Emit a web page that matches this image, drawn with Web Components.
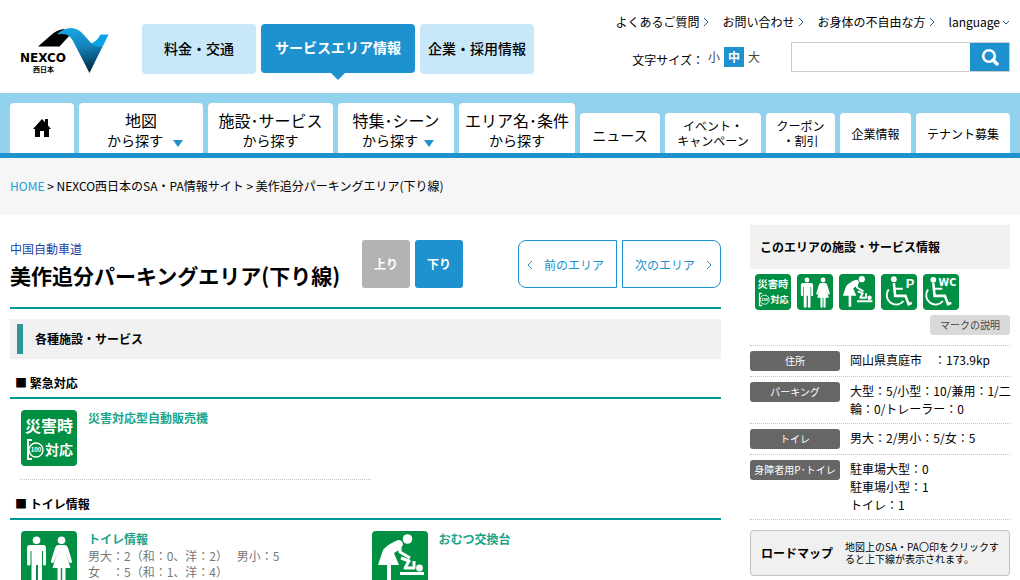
<!DOCTYPE html>
<html lang="ja">
<head>
<meta charset="utf-8">
<meta name="viewport" content="width=device-width, initial-scale=1">
<title>美作追分パーキングエリア(下り線)</title>
<style>
  :root { --blue: #1e92cf; --teal: #009a9a; --grey: #f1f1f1; --dot: #c4c4c4; --green: #008f43; }
  body { margin: 0; background: #fff; color: #000; font: 12px/18px "Noto Sans CJK JP", sans-serif; }
  .columns { display: grid; grid-template-columns: minmax(0, 1fr) 260px; gap: 29px; padding: 0 10px; align-items: start; }
</style>
</head>
<body>
<site-header></site-header>
<site-nav></site-nav>
<bread-crumb></bread-crumb>
<div class="columns">
  <main>
    <area-title road="中国自動車道">美作追分パーキングエリア(下り線)</area-title>
    <section-band>各種施設・サービス</section-band>
    <facility-group heading="緊急対応">
      <facility-item icon="disaster" heading="災害対応型自動販売機" ruled></facility-item>
    </facility-group>
    <facility-group heading="トイレ情報">
      <facility-item icon="toilet" heading="トイレ情報">男大：2（和：0、洋：2）　 男小：5<br>女　：5（和：1、洋：4）</facility-item>
      <facility-item icon="diaper" heading="おむつ交換台"></facility-item>
    </facility-group>
  </main>
  <area-summary>
    <info-row label="住所">岡山県真庭市　：173.9kp</info-row>
    <info-row label="パーキング">大型：5/小型：10/兼用：1/二輪：0/トレーラー：0</info-row>
    <info-row label="トイレ">男大：2/男小：5/女：5</info-row>
    <info-row label="身障者用P･トイレ">駐車場大型：0<br>駐車場小型：1<br>トイレ：1</info-row>
  </area-summary>
</div>

<script>
function define(name, render) {
  customElements.define(name, class extends HTMLElement {
    constructor() { super(); this.attachShadow({ mode: "open" }); }
    connectedCallback() {
      const t = document.createElement("template");
      t.innerHTML = render(this);
      this.shadowRoot.replaceChildren(t.content.cloneNode(true));
    }
  });
}

/* Arrow pointing left, right or down */
define("chevron-mark", el => {
  const d = { left: "M5 1 1 5l4 4", right: "M1 1l4 4-4 4", down: "M1 2l3 3 3-3" }[el.getAttribute("to")];
  const down = el.getAttribute("to") === "down";
  return `<style>:host{display:inline-flex} svg{display:block}</style>
  <svg width="${down ? 8 : 6}" height="${down ? 6 : 10}" aria-hidden="true"><path d="${d}" fill="none" stroke="currentColor"/></svg>`;
});

/* Green pictograms, drawn on a 56-unit square */
const chair = `<path d="M12 24A14 14 0 1 0 35 42" stroke-width="3"/><path d="M20 14l2 20h16l5 13 5-2" stroke-width="4"/><path d="M21 23h13" stroke-width="3"/>`;
const picts = {
  disaster: `<g font-family="Noto Sans CJK JP, sans-serif" font-weight="700" fill="#fff" text-anchor="middle">
    <text x="28" y="22" font-size="16">災害時</text><text x="38" y="45" font-size="14">対応</text>
    <text x="15" y="42" font-size="6">100</text></g>
    <path d="M11 30H7v19h4" fill="none" stroke="#fff" stroke-width="2"/><circle cx="15" cy="40" r="7" fill="none" stroke="#fff" stroke-width="1.4"/>`,
  toilet: `<g fill="#fff"><circle cx="15.5" cy="9.3" r="3.8"/><path d="M9 14h13q3 0 3 3v16q0 1.5-1.4 1.5T22 33V20h-1v31q0 1.500-2 1.500T17 51V34h-2v17q0 1.500-2 1.500T10.500 51V20h-1v13q0 1.500-1.700 1.500T6 33V17q0-3 3-3z"/>
    <circle cx="40.500" cy="9.300" r="3.800"/><path d="M37 14h7q2 0 3 3l4 13q.3 1.700-1 2t-2-1l-3.500-10 5 16h-5v14q0 1.500-1.700 1.500T41.200 51V37h-1.400v14q0 1.500-1.600 1.500T36.500 51V37h-5l5-16-3.500 10q-.6 1.400-2 1t-1-2l4-13q1-3 3-3z"/></g>`,
  diaper: `<g fill="#fff"><circle cx="35.500" cy="8" r="4.800"/><path d="M6 34l5-15q5-6 15-10 5 0 5 5l-4 5-5 3 5 12h-8v17h-4V34z"/><circle cx="47.500" cy="37" r="3.400"/><path d="M28 41h24v3H28z"/></g>
    <path d="M28 12v9l10 6M29 27l8 3-4 7h9v-7" fill="none" stroke="#fff" stroke-width="3" stroke-linejoin="round"/>`,
  parking: `<circle cx="20" cy="8" r="4.500" fill="#fff"/><g fill="none" stroke="#fff">${chair}</g><text x="45" y="21" text-anchor="middle" font-family="Liberation Sans, sans-serif" font-weight="700" font-size="20" fill="#fff">P</text>`,
  wc: `<g transform="translate(-4)"><circle cx="20" cy="9" r="4.500" fill="#fff"/><g fill="none" stroke="#fff">${chair}</g></g><text x="38" y="18" text-anchor="middle" font-family="DejaVu Sans, sans-serif" font-weight="700" font-size="15" fill="#fff">WC</text>`
};
define("pict-icon", el => `<style>
  :host{display:block;width:56px;height:56px;flex:none}
  :host([small]){width:36px;height:36px}
  svg{display:block;width:100%;height:100%;border-radius:4px;background:var(--green)}</style>
  <svg viewBox="0 0 56 56" aria-hidden="true">${picts[el.getAttribute("name")]}</svg>`);

define("site-logo", () => `<style>:host{display:block} a,svg{display:block}</style>
<a href="#" aria-label="NEXCO 西日本"><svg width="90" height="48" viewBox="0 0 90 48">
  <defs><linearGradient id="r" gradientUnits="userSpaceOnUse" x1="60" y1="2" x2="68" y2="46"><stop offset="0" stop-color="#17a3df"/><stop offset=".4" stop-color="#1583bd"/><stop offset=".7" stop-color="#07557f"/><stop offset="1" stop-color="#012030"/></linearGradient></defs>
  <path d="M18 19.500 30 9q6-6 14-7l6 6-10.500 11.500z" fill="#000"/>
  <path d="M37 7.500Q43 1 51 1q7 0 13 7l7 8q3 2 7 1.500 3 0 5 1L69.500 46 54 16q-3-7-8-8.500-4-1-9 0z" fill="url(#r)"/>
  <path d="M80.500 7.500h8L83.500 18q-3 3-8 1-2-1-4-3 5-1 9-8.500z" fill="#0aa4e8"/>
  <text x="0" y="35" font-family="DejaVu Sans, sans-serif" font-weight="700" font-size="12">NEXCO</text>
  <text x="13" y="45" font-family="Noto Sans CJK JP, sans-serif" font-weight="700" font-size="7">西日本</text>
</svg></a>`);

define("site-header", () => `<style>
  :host{display:block}
  header{display:flex;justify-content:space-between;height:93px;padding:0 10px 0 20px;box-sizing:border-box}
  a{color:inherit;text-decoration:none}
  .left{display:flex;align-items:flex-start}
  site-logo{margin-top:27px;width:90px;margin-right:32px}
  .tabs{display:flex;gap:5px;margin-top:24px}
  .tabs a{width:114px;height:50px;box-sizing:border-box;padding-bottom:2px;display:flex;align-items:center;justify-content:center;background:#c8e8f9;border-radius:4px;font-size:14px;font-weight:500;white-space:nowrap}
  .tabs a.on{position:relative;width:154px;height:49px;padding-bottom:4px;background:var(--blue);color:#fff;font-weight:700}
  .on::after{content:"";position:absolute;top:100%;left:50%;margin-left:-7px;border:7px solid transparent;border-top-color:var(--blue);border-bottom:0}
  .right{display:flex;flex-direction:column;align-items:flex-end;padding-top:13px;gap:11px}
  .links{display:flex;gap:13px;white-space:nowrap}
  .links a{display:flex;align-items:center;gap:4px}
  .links a:last-child{gap:2px}
  chevron-mark{color:#1a5f9e}
  .tools{display:flex;align-items:flex-start}
  .size{display:flex;align-items:flex-start;gap:4px;margin-right:31px;padding-top:5px;color:#444}
  .size span{color:#000;padding-top:4px}
  .size button{border:0;padding:0;margin:0;background:none;font:inherit;height:20px;width:12px;color:inherit}
  .size button.on{background:var(--blue);color:#fff;font-weight:700;width:20px}
  form{display:flex;width:219px;height:30px;box-sizing:border-box;border:1px solid #ccc;margin:0}
  input{flex:1;min-width:0;border:0;padding:0 8px;font:inherit;background:#fff}
  form button{width:39px;border:0;padding:0;background:var(--blue);display:flex;align-items:center;justify-content:center}
  </style>
<header>
  <div class="left"><site-logo></site-logo>
    <nav class="tabs"><a href="#">料金・交通</a><a href="#" class="on">サービスエリア情報</a><a href="#">企業・採用情報</a></nav></div>
  <div class="right">
    <div class="links"><a href="#">よくあるご質問<chevron-mark to="right"></chevron-mark></a><a href="#">お問い合わせ<chevron-mark to="right"></chevron-mark></a><a href="#">お身体の不自由な方<chevron-mark to="right"></chevron-mark></a><a href="#">language<chevron-mark to="down"></chevron-mark></a></div>
    <div class="tools">
      <div class="size"><span>文字サイズ：</span><button type="button">小</button><button type="button" class="on">中</button><button type="button">大</button></div>
      <form><input type="text" aria-label="サイト内検索"><button type="button" aria-label="検索"><svg width="18" height="18" viewBox="0 0 18 18" fill="none" stroke="#fff"><circle cx="8" cy="8" r="5.800" stroke-width="2.600"/><path d="M12 12l4 4" stroke-width="3.400" stroke-linecap="round"/></svg></button></form>
    </div>
  </div>
</header>`);

define("nav-item", () => `<style>
  :host{display:block;height:40px}
  :host([tall]){height:50px}
  a{position:relative;display:flex;flex-direction:column;align-items:center;justify-content:center;height:100%;background:#fff;border-radius:4px 4px 0 0;color:#000;text-decoration:none;text-align:center;line-height:15px;white-space:nowrap;font-size:12px}
  :host([tall]) a{font-size:14px;line-height:20px;padding-top:4px;box-sizing:border-box}
  :host([tall]) a ::slotted(b){font-size:16px;font-weight:400}
  :host([menu]) ::slotted(span){padding-right:12px}
  :host([menu]) a::after{content:"";position:absolute;right:20px;bottom:6px;border:5px solid transparent;border-top:7px solid var(--blue);border-bottom:0}
  </style><a href="#"><slot></slot></a>`);

define("site-nav", () => `<style>
  :host{display:block}
  nav{display:grid;grid-template-columns:64fr 124fr 125fr 116fr 116fr 80fr 96fr 69fr 71fr 94fr;gap:5px;align-items:end;height:60px;padding:0 10px;background:#93d2ee;border-bottom:5px solid var(--blue)}
  svg{display:block;margin-bottom:4px}
  .news{font-size:14px;padding-top:4px}
  </style>
<nav aria-label="サービスエリア情報">
  <nav-item tall><svg width="20" height="20" viewBox="0 0 20 20" role="img" aria-label="ホーム"><path d="M1 11 10 1l3 3.300V1h3v6.500L19 11h-2v8h-5v-6H8v6H3v-8z"/></svg></nav-item>
  <nav-item tall menu><b>地図</b><span>から探す</span></nav-item>
  <nav-item tall><b>施設･サービス</b><span>から探す</span></nav-item>
  <nav-item tall menu><b>特集･シーン</b><span>から探す</span></nav-item>
  <nav-item tall><b>エリア名･条件</b><span>から探す</span></nav-item>
  <nav-item><span class="news">ニュース</span></nav-item>
  <nav-item><span>イベント・</span><span>キャンペーン</span></nav-item>
  <nav-item><span>クーポン</span><span>・割引</span></nav-item>
  <nav-item>企業情報</nav-item>
  <nav-item>テナント募集</nav-item>
</nav>`);

define("bread-crumb", () => `<style>
  :host{display:block;background:#f6f6f6;padding:19px 10px 20px}
  a{color:#1a9fd9;text-decoration:none}</style>
<nav aria-label="パンくず"><a href="#">HOME</a> &gt; NEXCO西日本のSA・PA情報サイト &gt; 美作追分パーキングエリア(下り線)</nav>`);

define("area-title", el => `<style>
  :host{display:block;padding-top:25px}
  .bar{display:flex;justify-content:space-between;height:67px;border-bottom:2px solid var(--teal);white-space:nowrap}
  .left,.dir,.pager{display:flex;align-items:flex-start;gap:5px}
  .left{gap:18px}
  p{margin:0;color:#1b45a5}
  h1{margin:0;font-size:21px;line-height:34px;font-weight:700}
  .text{min-width:334px}
  a{display:flex;align-items:center;justify-content:center;height:48px;box-sizing:border-box;text-decoration:none}
  .dir a{width:48px;border-radius:3px;color:#fff;font-weight:700;background:#b3b3b3}
  .dir a.on{background:var(--blue)}
  .pager a{width:99px;border:1px solid var(--blue);color:var(--blue);justify-content:space-between;padding:2px 12px 0 8px}
  .pager a:first-child{border-radius:8px 0 0 8px}
  .pager a:last-child{border-radius:0 8px 8px 0;padding:2px 8px 0 12px}
  </style>
<div class="bar"><div class="left"><div class="text"><p>${el.getAttribute("road")}</p><h1><slot></slot></h1></div>
  <div class="dir"><a href="#">上り</a><a href="#" class="on">下り</a></div></div>
  <nav class="pager"><a href="#"><chevron-mark to="left"></chevron-mark>前のエリア</a><a href="#">次のエリア<chevron-mark to="right"></chevron-mark></a></nav></div>`);

define("section-band", () => `<style>
  :host{display:block;margin-top:10px;background:var(--grey);padding:5px 7px}
  h2{margin:0;border-left:6px solid #2f979b;padding-left:12px;font-size:12px;line-height:30px}</style><h2><slot></slot></h2>`);

define("facility-group", el => `<style>
  :host{display:block;padding-top:15px}
  h3{margin:0;padding:0 5px 5px;font-size:12px;line-height:18px;border-bottom:2px solid var(--teal)}
  div{display:grid;grid-template-columns:1fr 1fr;padding-left:10px}</style>
  <h3>■ ${el.getAttribute("heading")}</h3><div><slot></slot></div>`);

define("facility-item", el => `<style>
  :host{display:flex;gap:11px;padding:11px 0 13px 1px}
  :host([ruled]){border-bottom:1px dotted var(--dot)}
  h4{margin:-1px 0 0;color:#1aa58a;font-size:12px;line-height:18px}
  p{margin:0;color:#777;line-height:16px}</style>
  <pict-icon name="${el.getAttribute("icon")}"></pict-icon><div><h4>${el.getAttribute("heading")}</h4><p><slot></slot></p></div>`);

define("info-row", el => `<style>
  :host{display:block;padding:5px 0;border-bottom:1px dotted var(--dot)}
  dl{margin:0;display:grid;grid-template-columns:90px minmax(0,1fr);gap:10px;align-items:start}
  dt{background:#666;color:#fff;border-radius:3px;font-size:10px;line-height:20px;text-align:center;white-space:nowrap}
  dd{margin:0 -4px 0 0;word-break:break-all}</style>
  <dl><dt>${el.getAttribute("label")}</dt><dd><slot></slot></dd></dl>`);

define("area-summary", () => `<style>
  :host{display:block;padding-top:10px}
  h2{margin:0;padding:0 10px;background:var(--grey);font-size:12px;line-height:44px}
  .icons{display:flex;gap:6px;padding:5px}
  .mark{display:block;width:80px;margin:0 0 10px auto;background:#d9d9d9;border-radius:3px;color:#444;font-size:10px;line-height:20px;text-align:center;text-decoration:none}
  .rows{margin:0 0 10px;border-top:1px dotted var(--dot)}
  .map{display:flex;align-items:center;gap:12px;height:46px;box-sizing:border-box;padding:0 10px;border:1px solid #c4c4c4;border-radius:4px;background:#f0f0f0;color:#000;text-decoration:none}
  b{flex:none}
  .map span{font-size:10px;line-height:12px}
  </style>
<aside><h2>このエリアの施設・サービス情報</h2>
  <div class="icons">${["disaster", "toilet", "diaper", "parking", "wc"].map(n => `<pict-icon small name="${n}"></pict-icon>`).join("")}</div>
  <a class="mark" href="#">マークの説明</a>
  <div class="rows"><slot></slot></div>
  <a class="map" href="#"><b>ロードマップ</b><span>地図上のSA・PA〇印をクリックすると上下線が表示されます。</span></a>
</aside>`);
</script>
</body>
</html>
